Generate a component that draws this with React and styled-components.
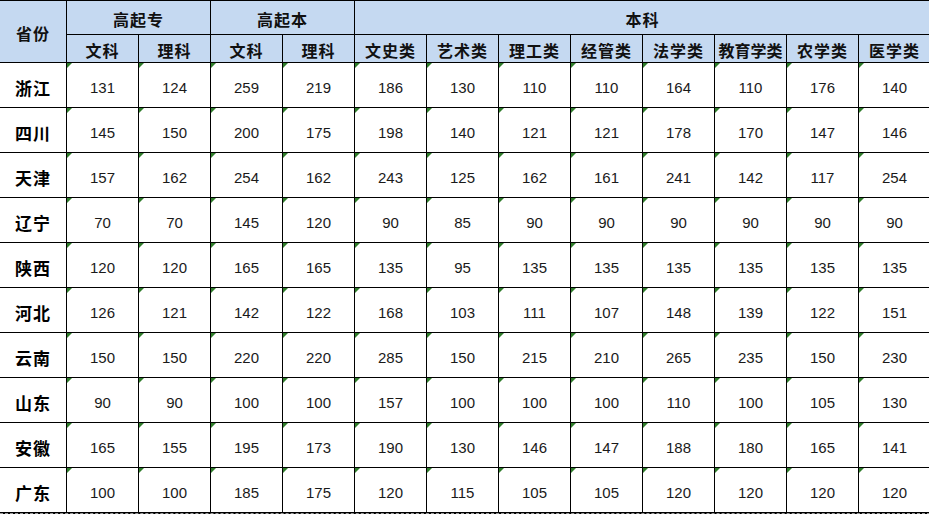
import React from "react";
import styled, { createGlobalStyle } from "styled-components";

const GlobalStyle = createGlobalStyle`
  html, body {
    margin: 0;
    padding: 0;
    background: #ffffff;
    overflow: hidden;
  }
`;

const subjects = ["文科", "理科", "文科", "理科", "文史类", "艺术类", "理工类", "经管类", "法学类", "教育学类", "农学类", "医学类"];

const rows = [
  ["浙江", 131, 124, 259, 219, 186, 130, 110, 110, 164, 110, 176, 140],
  ["四川", 145, 150, 200, 175, 198, 140, 121, 121, 178, 170, 147, 146],
  ["天津", 157, 162, 254, 162, 243, 125, 162, 161, 241, 142, 117, 254],
  ["辽宁", 70, 70, 145, 120, 90, 85, 90, 90, 90, 90, 90, 90],
  ["陕西", 120, 120, 165, 165, 135, 95, 135, 135, 135, 135, 135, 135],
  ["河北", 126, 121, 142, 122, 168, 103, 111, 107, 148, 139, 122, 151],
  ["云南", 150, 150, 220, 220, 285, 150, 215, 210, 265, 235, 150, 230],
  ["山东", 90, 90, 100, 100, 157, 100, 100, 100, 110, 100, 105, 130],
  ["安徽", 165, 155, 195, 173, 190, 130, 146, 147, 188, 180, 165, 141],
  ["广东", 100, 100, 185, 175, 120, 115, 105, 105, 120, 120, 120, 120],
];

const Page = styled.div`
  width: 929px;
  height: 518px;
  overflow: hidden;
`;

const Sheet = styled.div`
  display: grid;
  grid-template-columns: 66px repeat(12, 71px);
  grid-template-rows: 33px 27px repeat(10, 44px);
  gap: 1px;
  padding: 1px 0;
  width: 930px;
  background: #000000;
  border-bottom: 1px dashed #9a9a9a;
  margin-bottom: 2px;
`;

const HeadCell = styled.div`
  grid-column: ${(p) => p.col || "auto"};
  grid-row: ${(p) => p.row || "auto"};
  display: flex;
  align-items: center;
  justify-content: center;
  padding-top: 3px;
  background: #c5d9f1;
  color: #111111;
  font-family: "Noto Sans CJK SC", "Liberation Sans", sans-serif;
  font-weight: 700;
  font-size: 16px;
  letter-spacing: ${(p) => (p.tight ? "0" : "1px")};
  white-space: nowrap;
`;

const NameCell = styled.div`
  display: flex;
  align-items: center;
  justify-content: center;
  padding-top: 4px;
  background: #ffffff;
  color: #000000;
  font-family: "Noto Sans CJK SC", sans-serif;
  font-weight: 700;
  font-size: 17px;
  letter-spacing: 1px;
`;

const NumCell = styled.div`
  position: relative;
  display: flex;
  align-items: center;
  justify-content: center;
  padding-top: 4px;
  background: #ffffff;
  color: #1a1a1a;
  font-family: "Liberation Sans", "Noto Sans CJK SC", sans-serif;
  font-size: 15px;

  &::before {
    content: "";
    position: absolute;
    top: 0;
    left: 0;
    border-top: 5px solid #2f7d2b;
    border-right: 5px solid transparent;
  }
`;

export default function App() {
  return (
    <Page>
      <GlobalStyle />
      <Sheet>
        <HeadCell row="1 / span 2" col="1">省份</HeadCell>
        <HeadCell row="1" col="2 / span 2">高起专</HeadCell>
        <HeadCell row="1" col="4 / span 2">高起本</HeadCell>
        <HeadCell row="1" col="6 / span 8">本科</HeadCell>
        {subjects.map((s, i) => (
          <HeadCell key={i} row="2" tight={s.length > 3}>
            {s}
          </HeadCell>
        ))}
        {rows.map((r) => (
          <React.Fragment key={r[0]}>
            <NameCell>{r[0]}</NameCell>
            {r.slice(1).map((v, j) => (
              <NumCell key={j}>{v}</NumCell>
            ))}
          </React.Fragment>
        ))}
      </Sheet>
    </Page>
  );
}
